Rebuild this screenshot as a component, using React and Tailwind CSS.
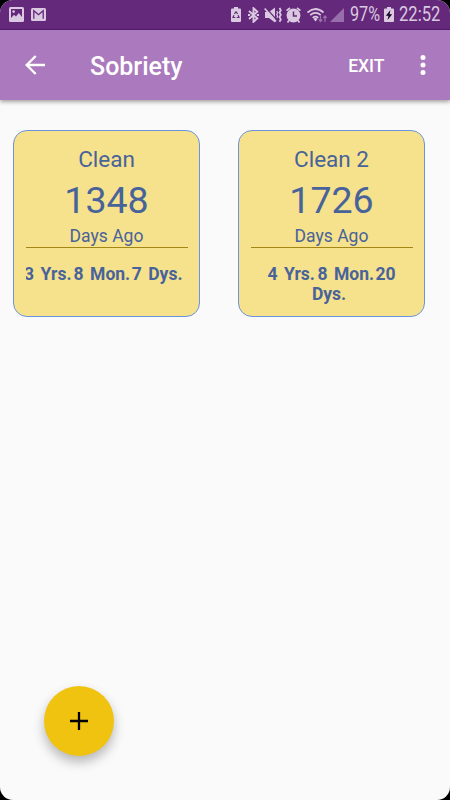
import React from 'react';

function NotificationIcons() {
  return (
    <div className="flex items-center gap-[7px]">
      <svg className="h-[15px] w-[15px]" viewBox="0 0 15 15">
        <rect width="15" height="15" rx="1.5" fill="#dac9e0" />
        <path d="M2 2h11v8L9.8 6 7 9.6 5 7.8 2 11z" fill="#64297b" />
        <circle cx="4.6" cy="4.6" r="1.3" fill="#dac9e0" />
      </svg>
      <svg className="h-[13px] w-[15px]" viewBox="0 0 15 13">
        <rect width="15" height="13" rx="1.5" fill="#dac9e0" />
        <path d="M2.8 10.8V2.7l4.7 4 4.7-4v8.1" fill="none" stroke="#64297b" strokeWidth="1.3" />
      </svg>
    </div>
  );
}

function SystemIcons() {
  return (
    <div className="flex items-center text-[#dac9e0]">
      <svg className="h-[15px] w-[10px]" viewBox="0 0 10 15">
        <path d="M3 0h4v1.500h2q1 0 1 1V14q0 1-1 1H1q-1 0-1-1V2.500q0-1 1-1h2z" fill="currentColor" />
        <path d="M3.400 7 5 4.700l1.600 2.300M7.100 8.200l.9 2.300H5.800M4.300 10.500H2l.9-2.300" fill="none" stroke="#64297b" strokeWidth="1.200" />
      </svg>
      <svg className="ml-[7px] h-[16px] w-[11px]" viewBox="0 0 11 16">
        <path d="M1 4 9.300 11.300 5.500 14.800V1.200L9.300 4.700 1 12" fill="none" stroke="currentColor" strokeWidth="1.900" />
        <path d="M0 8h2.200M8.800 8H11" stroke="currentColor" strokeWidth="1.900" />
      </svg>
      <svg className="ml-[5px] h-[16px] w-[18px]" viewBox="0 0 18 16">
        <path d="M1 5h4l6-4.500v15L5 11H1z" fill="currentColor" />
        <path d="M1.700.5 12.700 13" stroke="#64297b" strokeWidth="1.300" />
        <path d="m.7 1.500 11.300 13" stroke="currentColor" strokeWidth="1.700" />
        <path d="m15.500 1 1.300 2.200-1.300 2.300 1.300 2.300-1.300 2.300 1.300 2.300-1.300 2.300" fill="none" stroke="currentColor" strokeWidth="1.800" />
        <path d="m12.800 4 .8 1.500-.8 2 .8 2-.8 1.500" fill="none" stroke="currentColor" strokeWidth="1.200" />
      </svg>
      <svg className="ml-1 h-[16px] w-[15px]" viewBox="0 0 15 16">
        <circle cx="7.500" cy="8.500" r="6.900" fill="currentColor" />
        <path d="M.5 3.600 4 1M14.500 3.600 11 1M3 13.500l-1.500 2M12 13.500l1.500 2" stroke="currentColor" strokeWidth="1.700" />
        <path d="M7.500 4.500V9H11" fill="none" stroke="#64297b" strokeWidth="1.500" />
      </svg>
      <svg className="ml-[6px] h-[16px] w-[21px]" viewBox="0 0 21 16">
        <path d="M.5 5.500q8-7 16 0M3.200 8.200q5.300-4.500 10.600 0M5.700 10.900q2.800-2.400 5.600 0" fill="none" stroke="currentColor" strokeWidth="1.700" />
        <path d="m6.300 11.800 2.200 2.700 2.200-2.700q-2.200-1.500-4.400 0" fill="currentColor" />
        <path d="M13.500 9v5.500M11.800 12.500l1.700 2 1.700-2M18 15V9M16.300 11 18 9l1.700 2" fill="none" stroke="#9b71ab" strokeWidth="1.200" />
      </svg>
      <svg className="ml-[2px] h-[14px] w-[14px]" viewBox="0 0 14 14">
        <path d="M14 0v14H0z" fill="#976dac" />
      </svg>
      <span className="ml-[6px] mt-px w-[33px] origin-left scale-x-[0.83] whitespace-nowrap text-[19.5px] leading-[22px]">97%</span>
      <svg className="ml-[1px] h-[15px] w-[10px]" viewBox="0 0 10 15">
        <path d="M3 0h4v1.500h2q1 0 1 1V14q0 1-1 1H1q-1 0-1-1V2.500q0-1 1-1h2z" fill="currentColor" />
        <path d="M6.500 3 1.800 8.700h2.700L3.500 13 8.200 7.200H5.500z" fill="#190222" />
      </svg>
      <span className="ml-[4.500px] mt-px w-[42.500px] origin-left scale-x-[0.85] whitespace-nowrap text-[19.5px] leading-[22px]">22:52</span>
    </div>
  );
}

function AppBar() {
  return (
    <header className="flex h-[70px] items-center bg-[#ab79bd] pl-[25px] pr-[24.500px] text-white shadow-[0_2px_4px_rgba(0,0,0,0.35)]">
      <svg className="h-5 w-5" viewBox="0 0 20 20" aria-label="Back">
        <path d="M20 10H2M10.700 1 1.700 10l9 9" fill="none" stroke="currentColor" strokeWidth="2.400" />
      </svg>
      <h1 className="ml-[45px] mt-[3px] text-[25px] font-medium leading-[30px]">Sobriety</h1>
      <button className="ml-auto mt-px text-[17.5px] font-medium leading-5">EXIT</button>
      <svg className="ml-[35px] h-5 w-[6px]" viewBox="0 0 6 20" fill="currentColor">
        <circle cx="3" cy="2.500" r="2.500" />
        <circle cx="3" cy="10" r="2.500" />
        <circle cx="3" cy="17.500" r="2.500" />
      </svg>
    </header>
  );
}

function Counter({ title, days, children }) {
  return (
    <section className="flex h-[187px] w-[187px] flex-col items-center rounded-[14px] border border-[#6b94df] bg-[#f6e18c] px-[11px] pt-[15px] text-[#48639a]">
      <h2 className="text-[22.5px] leading-[27px]">{title}</h2>
      <p className="mt-[5px] text-[37.5px] leading-[44px]">{days}</p>
      <p className="mt-[4px] text-[17.5px] leading-[20px]">Days Ago</p>
      <div className="mt-[0.5px] h-[1.5px] w-[162px] shrink-0 bg-[#a48613]" />
      <div className="mt-[16px] w-[162px] overflow-hidden text-[17.5px] font-bold leading-[20px]">{children}</div>
    </section>
  );
}

export default function App() {
  return (
    <div className="h-[800px] w-[450px] overflow-hidden bg-black font-['Roboto',sans-serif]">
      <div className="relative flex h-full flex-col overflow-hidden rounded-[13px] bg-[#fafafa]">
        <div className="flex h-[30px] shrink-0 items-center justify-between border-b border-[#591b70] bg-[#64297b] pl-[9px] pr-[9px]">
          <NotificationIcons />
          <SystemIcons />
        </div>
        <AppBar />
        <main className="flex gap-[38px] pl-[13px] pt-[30px]">
          <Counter title="Clean" days="1348">
            <div className="-ml-[1.500px] flex whitespace-pre">
              <span>3</span>
              <span className="ml-[6.500px]">Yrs.</span>
              <span className="ml-[2px]">8</span>
              <span className="ml-[6.500px]">Mon.</span>
              <span className="ml-[1.500px]">7</span>
              <span className="ml-[6.500px]">Dys.</span>
            </div>
          </Counter>
          <Counter title="Clean 2" days="1726">
            <div className="flex justify-center whitespace-pre">
              <span>4</span>
              <span className="ml-[6.500px]">Yrs.</span>
              <span className="ml-[2.500px]">8</span>
              <span className="ml-[6.500px]">Mon.</span>
              <span className="ml-[1.500px]">20</span>
            </div>
            <div className="pr-[5px] text-center">Dys.</div>
          </Counter>
        </main>
        <button aria-label="Add" className="absolute bottom-[44px] left-[43.500px] flex h-[70px] w-[70px] items-center justify-center rounded-full bg-[#f0c310] shadow-[0_6px_12px_rgba(0,0,0,0.28)]">
          <svg className="h-[18px] w-[18px]" viewBox="0 0 18 18">
            <path d="M9 0v18M0 9h18" stroke="#000" strokeWidth="2.300" />
          </svg>
        </button>
      </div>
    </div>
  );
}
